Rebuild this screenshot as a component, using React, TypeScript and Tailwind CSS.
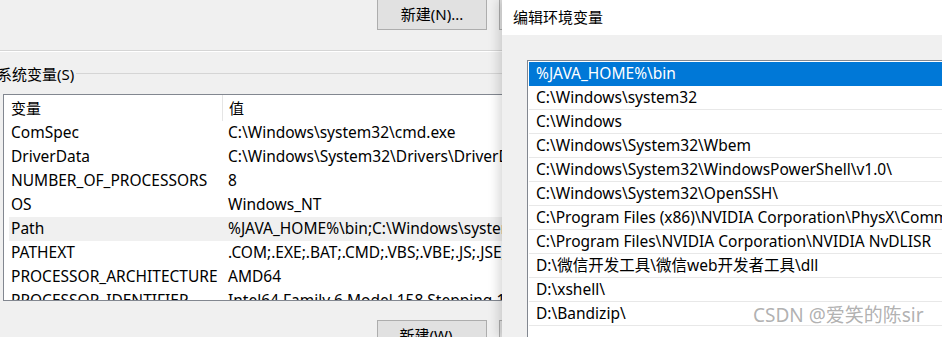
import React from "react";

const font = { fontFamily: '"Noto Sans", "Noto Sans CJK SC", sans-serif' };

const sysVars: [string, string][] = [
  ["ComSpec", "C:\\Windows\\system32\\cmd.exe"],
  ["DriverData", "C:\\Windows\\System32\\Drivers\\DriverData"],
  ["NUMBER_OF_PROCESSORS", "8"],
  ["OS", "Windows_NT"],
  ["Path", "%JAVA_HOME%\\bin;C:\\Windows\\system32;C:\\Windows;C:\\Windows\\System32\\Wbem"],
  ["PATHEXT", ".COM;.EXE;.BAT;.CMD;.VBS;.VBE;.JS;.JSE;.WSF;.WSH;.MSC"],
  ["PROCESSOR_ARCHITECTURE", "AMD64"],
  ["PROCESSOR_IDENTIFIER", "Intel64 Family 6 Model 158 Stepping 10, GenuineIntel"],
];

const paths = [
  "%JAVA_HOME%\\bin",
  "C:\\Windows\\system32",
  "C:\\Windows",
  "C:\\Windows\\System32\\Wbem",
  "C:\\Windows\\System32\\WindowsPowerShell\\v1.0\\",
  "C:\\Windows\\System32\\OpenSSH\\",
  "C:\\Program Files (x86)\\NVIDIA Corporation\\PhysX\\Common",
  "C:\\Program Files\\NVIDIA Corporation\\NVIDIA NvDLISR",
  "D:\\微信开发工具\\微信web开发者工具\\dll",
  "D:\\xshell\\",
  "D:\\Bandizip\\",
];

export default function App() {
  return (
    <div
      className="relative w-[942px] h-[337px] overflow-hidden bg-[#f0f0f0] flex text-[15.5px] text-black"
      style={font}
    >
      {/* Left: environment variables window */}
      <div className="w-[502px] shrink-0 flex flex-col overflow-hidden">
        <div className="h-[30px] flex gap-[12px] pl-[377px] shrink-0">
          <div className="w-[110px] h-full shrink-0 border border-t-0 border-[#adadad] bg-[#e1e1e1] flex items-center justify-center whitespace-nowrap text-[15px]">
            新建(N)...
          </div>
          <div className="w-[110px] h-full shrink-0 border border-t-0 border-[#adadad] bg-[#e1e1e1]" />
        </div>
        <div className="h-[20px] shrink-0" />
        <div className="h-px bg-[#d5d5d5] shrink-0" />
        <div className="h-px bg-white shrink-0" />
        <div className="mt-[12px] h-[20px] flex items-center shrink-0 ml-[-3px] text-[15px]">
          <span className="whitespace-nowrap leading-none">系统变量(S)</span>
          <div className="flex-1 h-px bg-[#d5d5d5] ml-[2px] mt-[-1px]" />
        </div>
        <div className="mt-[10px] ml-[3px] w-[560px] h-[207px] shrink-0 border border-[#828790] bg-white overflow-hidden">
          <div className="h-[26px] flex items-center">
            <div className="w-[218px] pl-[7px] shrink-0 text-[15px]">变量</div>
            <div className="w-px h-full bg-[#e5e5e5]" />
            <div className="pl-[6px] text-[15px]">值</div>
          </div>
          {sysVars.map(([k, v], i) => (
            <div
              key={k}
              className={`h-[24px] ml-[5px] flex items-center whitespace-nowrap ${i === 4 ? "bg-[#f0f0f0]" : ""}`}
            >
              <div className="w-[219px] pl-[2px] shrink-0 overflow-hidden">{k}</div>
              <div>{v}</div>
            </div>
          ))}
        </div>
        <div className="mt-[19px] flex gap-[12px] pl-[377px] shrink-0">
          <div className="w-[110px] h-[30px] shrink-0 border border-[#adadad] bg-[#e1e1e1] flex items-center justify-center whitespace-nowrap text-[15px]">
            新建(W)...
          </div>
          <div className="w-[110px] h-[30px] shrink-0 border border-[#adadad] bg-[#e1e1e1]" />
        </div>
      </div>

      {/* Right: edit environment variable dialog */}
      <div className="relative z-10 flex-1 flex flex-col bg-[#f0f0f0] shadow-[-4px_0_10px_rgba(0,0,0,0.15)] overflow-hidden">
        <div className="h-[35px] bg-white flex items-center pl-[11px] shrink-0 text-[15px]">
          编辑环境变量
        </div>
        <div className="mt-[25px] ml-[25px] w-[460px] flex-1 border-t border-l border-[#828790] bg-white pt-px pl-px">
          {paths.map((p, i) => (
            <div
              key={p}
              className={`h-[24px] pl-[7px] flex items-center whitespace-nowrap border-b ${
                i === 0 ? "bg-[#0078d7] text-white border-[#0078d7]" : "border-[#e8e8e8]"
              }`}
            >
              {p}
            </div>
          ))}
        </div>
      </div>

      {/* watermark */}
      <div className="absolute left-[753px] top-[306px] z-20 text-[19px] text-[#a8a8a8]/90 whitespace-nowrap leading-none">
        CSDN @爱笑的陈sir
      </div>
    </div>
  );
}
